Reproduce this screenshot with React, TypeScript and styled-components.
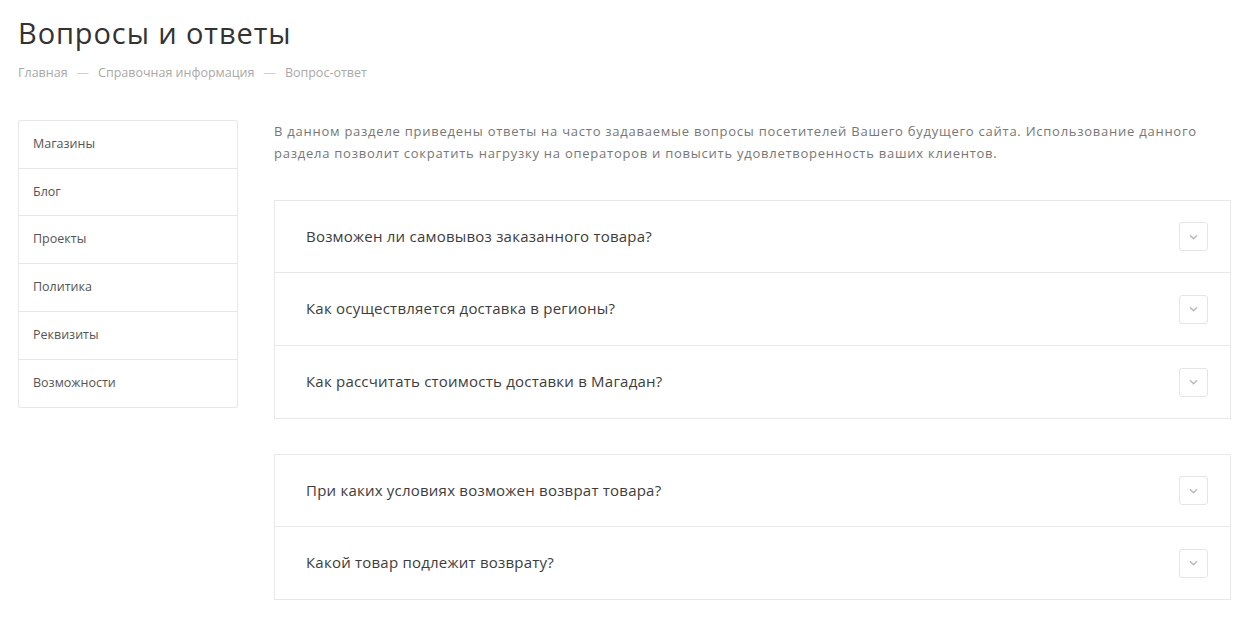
import React from "react";
import styled, { createGlobalStyle } from "styled-components";

const Global = createGlobalStyle`
  html, body { margin: 0; padding: 0; background: #fff; }
  body { font-family: "Open Sans", "Noto Sans", sans-serif; color: #333; }
  * { box-sizing: border-box; }
`;

const Page = styled.div`
  padding: 14px 23px 0 18px;
`;

const Title = styled.h1`
  margin: 0;
  font-size: 29px;
  font-weight: 400;
  line-height: 38px;
  color: #333;
  letter-spacing: 0.9px;
`;

const Crumbs = styled.div`
  display: flex;
  align-items: center;
  gap: 9px;
  margin-top: 12px;
  font-size: 12.5px;
  line-height: 18px;
  color: #a9a9a9;
`;

const Sep = styled.span`
  color: #d0d0d0;
`;

const Layout = styled.div`
  display: grid;
  grid-template-columns: 220px 1fr;
  column-gap: 36px;
  margin-top: 38px;
  align-items: start;
`;

const Menu = styled.nav`
  border: 1px solid #e8e8e8;
  border-radius: 2px;
  display: flex;
  flex-direction: column;
`;

const MenuItem = styled.div`
  height: 48px;
  display: flex;
  align-items: center;
  padding: 0 0 2px 14px;
  font-size: 12.5px;
  color: #555;
  & + & { border-top: 1px solid #e8e8e8; }
  &:first-child { height: 47px; }
  &:nth-child(2) { height: 47px; }
`;

const Main = styled.div`
  display: flex;
  flex-direction: column;
`;

const Intro = styled.p`
  margin: 0;
  font-size: 13px;
  line-height: 22px;
  color: #777;
  letter-spacing: 0.75px;
`;

const Group = styled.div<{ $top: number }>`
  border: 1px solid #e8e8e8;
  margin-top: ${(p) => p.$top}px;
`;

const Row = styled.div`
  height: 71px;
  display: flex;
  align-items: center;
  justify-content: space-between;
  padding: 0 22px 2px 31px;
  & + & { border-top: 1px solid #e8e8e8; height: 73px; }
`;

const Question = styled.span`
  font-size: 15px;
  color: #3d3d3d;
  letter-spacing: 0.22px;
`;

const Toggle = styled.span`
  width: 29px;
  height: 29px;
  margin-top: 2px;
  border: 1px solid #e5e5e5;
  border-radius: 3px;
  display: flex;
  align-items: center;
  justify-content: center;
`;

const Chevron = () => (
  <svg width="9" height="6" viewBox="0 0 9 6">
    <path d="M1 1.2l3.5 3.5 3.5-3.5" fill="none" stroke="#b8b8b8" strokeWidth="1.4" />
  </svg>
);

const menu = ["Магазины", "Блог", "Проекты", "Политика", "Реквизиты", "Возможности"];
const groups = [
  [
    "Возможен ли самовывоз заказанного товара?",
    "Как осуществляется доставка в регионы?",
    "Как рассчитать стоимость доставки в Магадан?",
  ],
  ["При каких условиях возможен возврат товара?", "Какой товар подлежит возврату?"],
];

export default function App() {
  return (
    <Page>
      <Global />
      <Title>Вопросы и ответы</Title>
      <Crumbs>
        <span>Главная</span>
        <Sep>—</Sep>
        <span>Справочная информация</span>
        <Sep>—</Sep>
        <span>Вопрос-ответ</span>
      </Crumbs>
      <Layout>
        <Menu>
          {menu.map((m) => (
            <MenuItem key={m}>{m}</MenuItem>
          ))}
        </Menu>
        <Main>
          <Intro>
            В данном разделе приведены ответы на часто задаваемые вопросы посетителей Вашего будущего сайта. Использование данного
            раздела позволит сократить нагрузку на операторов и повысить удовлетворенность ваших клиентов.
          </Intro>
          {groups.map((g, i) => (
            <Group key={i} $top={i === 0 ? 36 : 35}>
              {g.map((q) => (
                <Row key={q}>
                  <Question>{q}</Question>
                  <Toggle>
                    <Chevron />
                  </Toggle>
                </Row>
              ))}
            </Group>
          ))}
        </Main>
      </Layout>
    </Page>
  );
}
